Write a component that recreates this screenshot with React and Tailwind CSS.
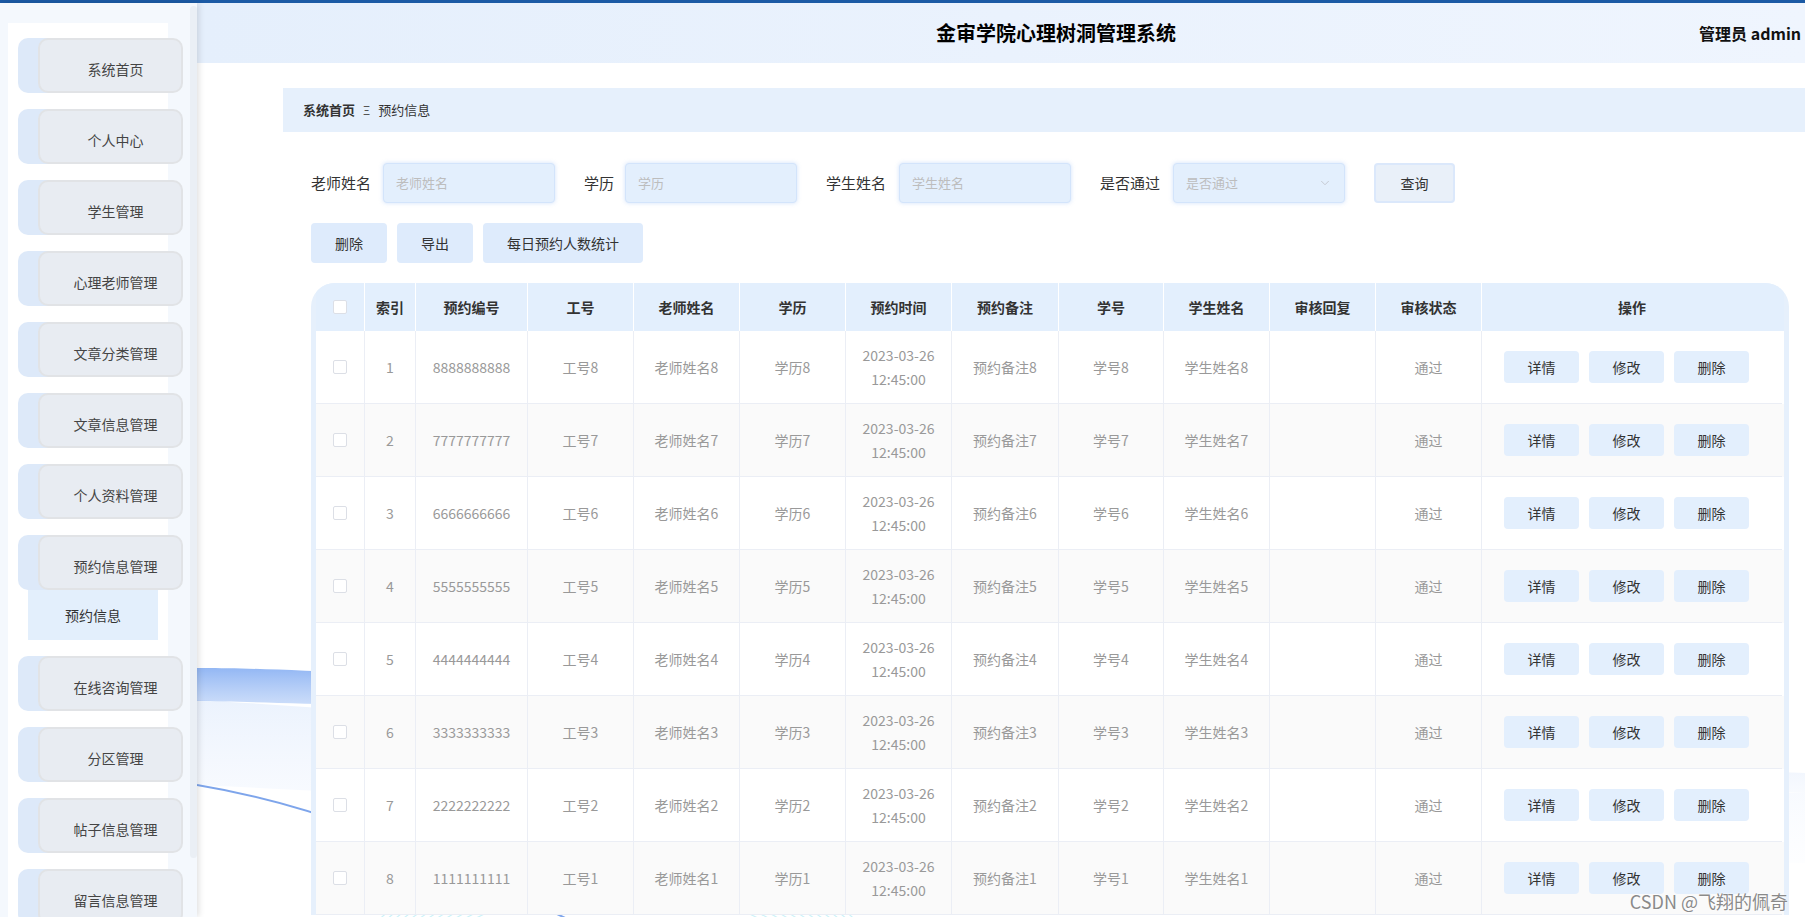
import { ChevronDown } from 'lucide-react'

const menu = [
  '系统首页',
  '个人中心',
  '学生管理',
  '心理老师管理',
  '文章分类管理',
  '文章信息管理',
  '个人资料管理',
  '预约信息管理',
  '在线咨询管理',
  '分区管理',
  '帖子信息管理',
  '留言信息管理',
]

const cols = [
  'w-[49px]',
  'w-[51px]',
  'w-[112px]',
  'w-[106px]',
  'w-[106px]',
  'w-[106px]',
  'w-[106px]',
  'w-[107px]',
  'w-[105px]',
  'w-[106px]',
  'w-[106px]',
  'w-[106px]',
  'w-[300px]',
]

const heads = ['', '索引', '预约编号', '工号', '老师姓名', '学历', '预约时间', '预约备注', '学号', '学生姓名', '审核回复', '审核状态', '操作']

const rows = [8, 7, 6, 5, 4, 3, 2, 1].map((n, i) => ({
  idx: i + 1,
  code: String(n).repeat(10),
  n,
}))

function MenuItem({ label }) {
  return (
    <div className="ml-[10px] h-[55px] w-[120px] rounded-[10px] bg-[#dde9f9] pl-[20px]">
      <div className="flex h-full w-[145px] items-center justify-center rounded-[10px] border-2 border-[#e1e3e6] bg-[#e8ecf2] pl-[10px] pt-[8px] text-[14px] text-[#444]">
        {label}
      </div>
    </div>
  )
}

function Checkbox() {
  return <span className="inline-block h-[14px] w-[14px] rounded-[2px] border border-[#dcdfe6] bg-white" />
}

function Field({ label, labelW, placeholder, select }) {
  return (
    <div className="mr-[29px] flex items-center">
      <span className={`${labelW} text-[15px] text-[#333]`}>{label}</span>
      <div className="flex h-[40px] w-[172px] items-center justify-between rounded-[4px] border border-[#d3e4fb] bg-[#e3effd] px-[12px] shadow-[0_0_4px_rgba(120,170,240,0.35)]">
        <span className="text-[13px] text-[#bdbdbd]">{placeholder}</span>
        {select && <ChevronDown className="h-[14px] w-[14px] text-[#c0c4cc]" strokeWidth={1.5} />}
      </div>
    </div>
  )
}

function Waves() {
  return (
    <svg className="pointer-events-none absolute inset-0 z-0" width="1608" height="914" viewBox="0 0 1608 914">
      <defs>
        <linearGradient id="band" x1="0" y1="0" x2="0" y2="1">
          <stop offset="0" stopColor="#6f9ff0" stopOpacity="0.75" />
          <stop offset="0.35" stopColor="#a9c6f6" stopOpacity="0.5" />
          <stop offset="1" stopColor="#dce8fb" stopOpacity="0.2" />
        </linearGradient>
        <linearGradient id="haze" x1="0" y1="0" x2="0" y2="1">
          <stop offset="0" stopColor="#e9f1fd" stopOpacity="0.9" />
          <stop offset="1" stopColor="#f6f9ff" stopOpacity="0.2" />
        </linearGradient>
      </defs>
      <path d="M0 697 C 400 720, 1100 790, 1608 790 L1608 860 C 1100 850, 400 800, 0 782 Z" fill="url(#haze)" />
      <path d="M0 665 C 120 664, 500 690, 900 720 C 1200 745, 1450 765, 1608 770 L1608 790 C 1450 784, 1200 765, 900 742 C 500 712, 120 700, 0 698 Z" fill="url(#band)" />
      <path d="M0 782 C 60 792, 110 806, 160 825 C 260 862, 360 910, 460 960" stroke="#5e8fe6" strokeWidth="2" fill="none" opacity="0.8" />
      {[0, 1, 2, 3, 4, 5, 6, 7, 8, 9, 10, 11].map((k) => (
        <circle key={k} cx="420" cy="1180" r={300 + k * 5} stroke="#bfeff6" strokeWidth="1.2" fill="none" opacity="0.8" />
      ))}
    </svg>
  )
}

export default function App() {
  return (
    <div className="flex h-[917px] w-[1805px] flex-col overflow-hidden bg-white font-['Noto_Sans_CJK_SC','Microsoft_YaHei',sans-serif]">
      <div className="h-[3px] w-full bg-[#1b5aa5]" />
      <div className="flex h-[914px]">
        {/* sidebar */}
        <aside className="relative z-20 flex h-full w-[197px] shrink-0 bg-[#f4f8fd] shadow-[2px_0_6px_rgba(0,0,0,0.12)]">
          <div className="ml-[8px] mt-[20px] flex w-[160px] flex-col gap-[16px] bg-white pt-[15px]">
            {menu.map((m) => (
              <div key={m}>
                <MenuItem label={m} />
                {m === '预约信息管理' && (
                  <div className="ml-[20px] flex h-[50px] w-[130px] items-center justify-center bg-[#e3effc] text-[14px] text-[#333]">
                    预约信息
                  </div>
                )}
              </div>
            ))}
          </div>
          <div className="ml-[22px] mt-[3px] h-[852px] w-[7px] rounded-[4px] bg-[#eaeff5]" />
        </aside>

        {/* main */}
        <main className="relative flex-1">
          <Waves />
          <div className="relative z-10">
            <header className="flex h-[60px] items-center bg-gradient-to-r from-[#e5effc] to-[#eff5fe]">
              <h1 className="pl-[739px] text-[20px] font-bold leading-none text-black">金审学院心理树洞管理系统</h1>
              <div className="flex-1" />
              <span className="pr-[4px] text-[16px] font-bold text-[#111]">管理员 admin</span>
            </header>

            <div className="pl-[86px] pt-[25px]">
              <div className="flex h-[44px] items-center bg-[#e6f0fc] pl-[20px] text-[13px] text-[#333]">
                <span className="font-bold">系统首页</span>
                <span className="mx-[8px] text-[12px] text-[#555]">Ξ</span>
                <span>预约信息</span>
              </div>

              <div className="pl-[28px]">
                <div className="mt-[31px] flex h-[40px] items-center">
                  <Field label="老师姓名" labelW="w-[72px]" placeholder="老师姓名" />
                  <Field label="学历" labelW="w-[41px]" placeholder="学历" />
                  <Field label="学生姓名" labelW="w-[73px]" placeholder="学生姓名" />
                  <Field label="是否通过" labelW="w-[73px]" placeholder="是否通过" select />
                  <button className="h-[40px] w-[81px] rounded-[4px] border-2 border-[#dbe8fb] bg-[#e9f0f9] text-[14px] text-[#333]">
                    查询
                  </button>
                </div>

                <div className="mt-[20px] flex h-[40px] gap-[10px]">
                  <button className="h-[40px] w-[76px] rounded-[4px] bg-[#deebfc] text-[14px] text-[#333]">删除</button>
                  <button className="h-[40px] w-[76px] rounded-[4px] bg-[#deebfc] text-[14px] text-[#333]">导出</button>
                  <button className="h-[40px] w-[160px] rounded-[4px] bg-[#deebfc] text-[14px] text-[#333]">每日预约人数统计</button>
                </div>

                {/* table */}
                <div className="mt-[20px] w-[1478px] overflow-hidden rounded-t-[24px] bg-[#e6f0fc] px-[5px]">
                  <div className="flex h-[48px] bg-[#e3effd]">
                    {heads.map((h, i) => (
                      <div
                        key={i}
                        className={`${cols[i]} flex shrink-0 items-center justify-center border-r border-white text-[14px] font-bold text-[#333] last:border-r-0`}
                      >
                        {i === 0 ? <Checkbox /> : h}
                      </div>
                    ))}
                  </div>
                  {rows.map((r, ri) => {
                    const cells = [
                      <Checkbox />,
                      r.idx,
                      r.code,
                      `工号${r.n}`,
                      `老师姓名${r.n}`,
                      `学历${r.n}`,
                      <div className="leading-[24px]">
                        <div>2023-03-26</div>
                        <div>12:45:00</div>
                      </div>,
                      `预约备注${r.n}`,
                      `学号${r.n}`,
                      `学生姓名${r.n}`,
                      '',
                      '通过',
                      null,
                    ]
                    return (
                      <div key={ri} className={`flex h-[73px] ${ri % 2 === 0 ? 'bg-white' : 'bg-[#fafafa]'}`}>
                        {cells.map((c, ci) =>
                          ci === 12 ? (
                            <div key={ci} className={`${cols[ci]} flex shrink-0 items-center gap-[10px] border-b border-[#ebeef5] pl-[22px]`}>
                              {['详情', '修改', '删除'].map((b) => (
                                <button key={b} className="h-[32px] w-[75px] rounded-[4px] bg-[#e3effd] text-[14px] text-[#333]">
                                  {b}
                                </button>
                              ))}
                            </div>
                          ) : (
                            <div
                              key={ci}
                              className={`${cols[ci]} flex shrink-0 items-center justify-center border-b border-r border-[#ebeef5] text-center text-[14px] text-[#999]`}
                            >
                              {c}
                            </div>
                          )
                        )}
                      </div>
                    )
                  })}
                </div>
              </div>
            </div>
          </div>
          <div className="absolute bottom-[7px] right-[17px] z-30 text-[18px] leading-none text-[#8a8a8a] [text-shadow:0_0_2px_#fff,0_0_2px_#fff]">
            CSDN @飞翔的佩奇
          </div>
        </main>
      </div>
    </div>
  )
}
